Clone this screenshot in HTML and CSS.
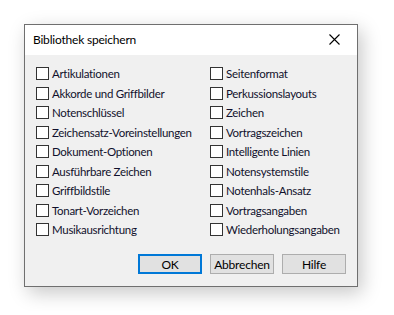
FILE: index.html
```html
<!DOCTYPE html>
<html lang="de">

<head>
    <meta charset="UTF-8">
    <title>Bibliothek speichern</title>
    <link rel="stylesheet" href="styles.css">
</head>

<body>
    <div class="dialog">
        <div class="titleBar">
            <span class="title">Bibliothek speichern</span>
            <span class="closeButton">
                <svg width="11" height="11" viewBox="0 0 11 11">
                    <path d="M0.5 0.5 L10.5 10.5 M10.5 0.5 L0.5 10.5" stroke="#000" stroke-width="1.1" fill="none"/>
                </svg>
            </span>
        </div>
        <div class="content">
            <div class="options">
                <div class="column">
                    <label class="option"><span class="box"></span>Artikulationen</label>
                    <label class="option"><span class="box"></span>Akkorde und Griffbilder</label>
                    <label class="option"><span class="box"></span>Notenschlüssel</label>
                    <label class="option"><span class="box"></span>Zeichensatz-Voreinstellungen</label>
                    <label class="option"><span class="box"></span>Dokument-Optionen</label>
                    <label class="option"><span class="box"></span>Ausführbare Zeichen</label>
                    <label class="option"><span class="box"></span>Griffbildstile</label>
                    <label class="option"><span class="box"></span>Tonart-Vorzeichen</label>
                    <label class="option"><span class="box"></span>Musikausrichtung</label>
                </div>
                <div class="column">
                    <label class="option"><span class="box"></span>Seitenformat</label>
                    <label class="option"><span class="box"></span>Perkussionslayouts</label>
                    <label class="option"><span class="box"></span>Zeichen</label>
                    <label class="option"><span class="box"></span>Vortragszeichen</label>
                    <label class="option"><span class="box"></span>Intelligente Linien</label>
                    <label class="option"><span class="box"></span>Notensystemstile</label>
                    <label class="option"><span class="box"></span>Notenhals-Ansatz</label>
                    <label class="option"><span class="box"></span>Vortragsangaben</label>
                    <label class="option"><span class="box"></span>Wiederholungsangaben</label>
                </div>
            </div>
            <div class="buttons">
                <button class="button default">OK</button>
                <button class="button">Abbrechen</button>
                <button class="button">Hilfe</button>
            </div>
        </div>
    </div>
</body>

</html>
```

FILE: styles.css
```css
body {
    margin: 0;
    padding: 24px;
    background-color: #fff;
    font-family: Lato, "Noto Sans", sans-serif;
    font-size: 11.5px;
    letter-spacing: -0.3px;
    color: #000;
}

.dialog {
    box-sizing: border-box;
    width: 334px;
    height: 263px;
    border: 1px solid #6f6f6f;
    background-color: #f0f0f0;
    box-shadow: 4px 6px 18px rgba(0, 0, 0, 0.22);
    display: flex;
    flex-direction: column;
}

.titleBar {
    height: 30px;
    background-color: #fff;
    display: flex;
    align-items: center;
    justify-content: space-between;
    padding-left: 8px;
}

.title {
    font-size: 12px;
    letter-spacing: -0.2px;
    margin-top: -1px;
}

.closeButton {
    width: 46px;
    height: 30px;
    display: flex;
    align-items: center;
    justify-content: center;
    margin-top: -1px;
}

.content {
    flex: 1;
    display: flex;
    flex-direction: column;
    padding: 9px 11px 12px 11px;
}

.options {
    display: flex;
    flex: 1;
}

.column {
    display: flex;
    flex-direction: column;
}

.column:first-child {
    flex: none;
    width: 174px;
}

.option {
    height: 19.5px;
    display: flex;
    align-items: center;
    white-space: nowrap;
    color: #10102c;
}

.box {
    box-sizing: border-box;
    width: 13px;
    height: 13px;
    border: 1px solid #333;
    background-color: #fff;
    margin-right: 3px;
    flex-shrink: 0;
}

.buttons {
    display: flex;
    justify-content: flex-end;
    gap: 8px;
}

.button {
    box-sizing: border-box;
    width: 64px;
    height: 20px;
    padding: 0;
    border: 1px solid #adadad;
    background-color: #e1e1e1;
    font-family: inherit;
    font-size: 12px;
    letter-spacing: -0.2px;
    color: #000;
}

.button.default {
    border: 2px solid #0078d7;
}
```
